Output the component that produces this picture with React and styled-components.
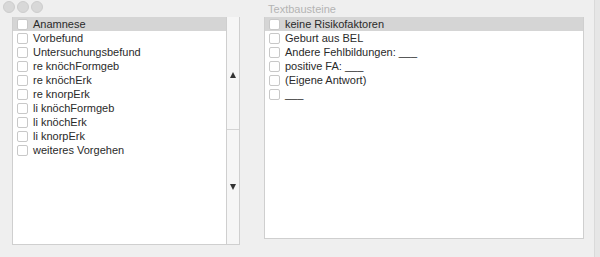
import styled, { createGlobalStyle } from "styled-components";

const leftItems = [
  "Anamnese",
  "Vorbefund",
  "Untersuchungsbefund",
  "re knöchFormgeb",
  "re knöchErk",
  "re knorpErk",
  "li knöchFormgeb",
  "li knöchErk",
  "li knorpErk",
  "weiteres Vorgehen",
];

const rightItems = [
  "keine Risikofaktoren",
  "Geburt aus BEL",
  "Andere Fehlbildungen: ___",
  "positive FA: ___",
  "(Eigene Antwort)",
  "___",
];

export default function App() {
  return (
    <>
      <Global />
      <Screen>
        <Window>
          <TitleBar>
            <Lights>
              <Light />
              <Light />
              <Light />
            </Lights>
            <Title>Textbausteine</Title>
          </TitleBar>
          <Content>
            <LeftGroup>
              <List>
                {leftItems.map((t, i) => (
                  <Row key={t} selected={i === 0}>
                    <Check />
                    <Label>{t}</Label>
                  </Row>
                ))}
              </List>
              <Scroller>
                <ScrollHalf>
                  <ArrowUp />
                </ScrollHalf>
                <ScrollHalf bottom>
                  <ArrowDown />
                </ScrollHalf>
              </Scroller>
            </LeftGroup>
            <RightList>
              {rightItems.map((t, i) => (
                <Row key={t} selected={i === 0}>
                  <Check />
                  <Label>{t}</Label>
                </Row>
              ))}
            </RightList>
          </Content>
        </Window>
        <Edge />
      </Screen>
    </>
  );
}

const Global = createGlobalStyle`
  html, body {
    margin: 0;
    padding: 0;
    background: #ececec;
  }
  body {
    font-family: "Liberation Sans", Arial, sans-serif;
  }
`;

const Screen = styled.div`
  width: 600px;
  height: 257px;
  display: flex;
  overflow: hidden;
`;

const Window = styled.div`
  width: 595px;
  height: 257px;
  background: #efefef;
  display: flex;
  flex-direction: column;
`;

const Edge = styled.div`
  width: 5px;
  height: 257px;
  background: #e6e6e6;
  border-left: 1px solid #dadada;
`;

const TitleBar = styled.div`
  height: 17px;
  position: relative;
  display: flex;
  align-items: center;
  justify-content: center;
`;

const Lights = styled.div`
  position: absolute;
  left: 3px;
  top: 1px;
  display: flex;
  gap: 2px;
`;

const Light = styled.div`
  width: 12px;
  height: 12px;
  border-radius: 50%;
  background: #d8d8d8;
  border: 0.5px solid #cdcdcd;
  box-sizing: border-box;
`;

const Title = styled.div`
  font-size: 11px;
  color: #b4b4b4;
  margin-left: 10px;
`;

const Content = styled.div`
  display: flex;
  padding-left: 12px;
  gap: 24px;
`;

const LeftGroup = styled.div`
  display: flex;
  width: 228px;
  height: 228px;
`;

const List = styled.div`
  width: 214px;
  background: #fff;
  border-left: 1px solid #cfcfcf;
  border-bottom: 1px solid #cfcfcf;
  box-sizing: border-box;
`;

const RightList = styled.div`
  width: 320px;
  height: 222px;
  background: #fff;
  border-left: 1px solid #cfcfcf;
  border-right: 1px solid #cfcfcf;
  border-bottom: 1px solid #cfcfcf;
  box-sizing: border-box;
`;

const Row = styled.div`
  height: 14px;
  display: flex;
  align-items: center;
  padding-left: 4px;
  background: ${(p) => (p.selected ? "#d5d5d5" : "transparent")};
`;

const Check = styled.div`
  width: 11px;
  height: 11px;
  border: 1px solid #c8c8c8;
  border-radius: 2px;
  background: #fff;
  box-sizing: border-box;
  flex-shrink: 0;
`;

const Label = styled.span`
  margin-left: 5px;
  font-size: 11px;
  color: #2a2a2a;
  white-space: nowrap;
`;

const Scroller = styled.div`
  width: 14px;
  display: flex;
  flex-direction: column;
  background: #f6f6f6;
  border-left: 1px solid #cfcfcf;
  border-right: 1px solid #cfcfcf;
  border-bottom: 1px solid #cfcfcf;
  box-sizing: border-box;
`;

const ScrollHalf = styled.div`
  flex: ${(p) => (p.bottom ? "1" : "0 0 112px")};
  display: flex;
  align-items: center;
  justify-content: center;
  border-top: ${(p) => (p.bottom ? "1px solid #d4d4d4" : "none")};
`;

const ArrowUp = styled.div`
  width: 0;
  height: 0;
  border-left: 3.5px solid transparent;
  border-right: 3.5px solid transparent;
  border-bottom: 6px solid #333;
  margin-top: 4px;
`;

const ArrowDown = styled.div`
  width: 0;
  height: 0;
  border-left: 3.5px solid transparent;
  border-right: 3.5px solid transparent;
  border-top: 6px solid #333;
`;
